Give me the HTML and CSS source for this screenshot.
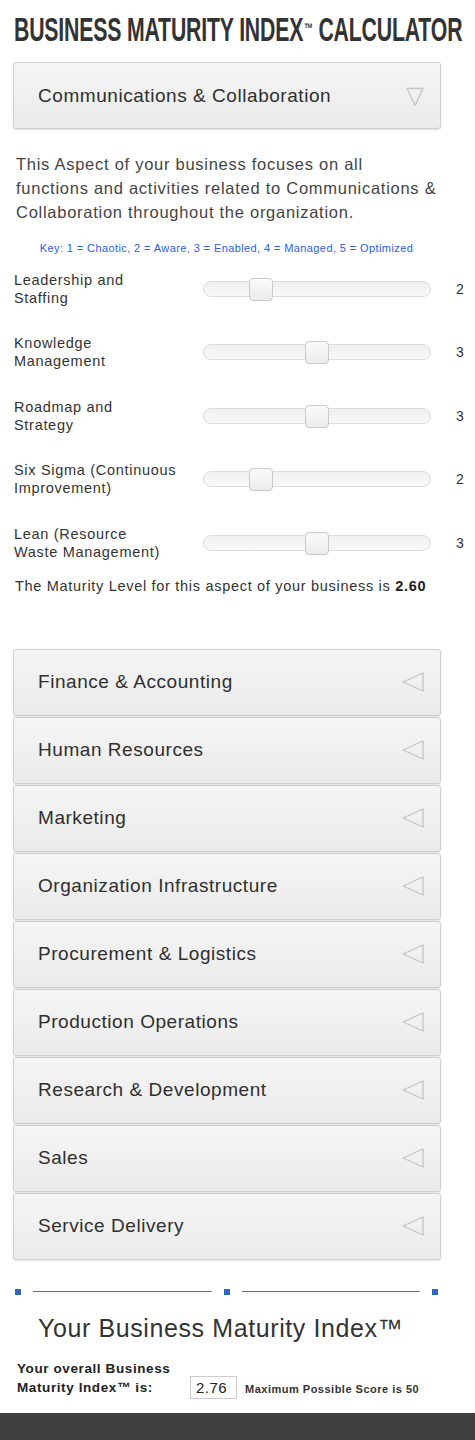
FILE: index.html
```html
<!DOCTYPE html>
<html>
<head>
<meta charset="utf-8">
<link rel="stylesheet" href="styles.css">
</head>
<body>
<div class="page">
  <h1 class="title"><span class="title-inner">BUSINESS MATURITY INDEX<sup class="tm">™</sup> CALCULATOR</span></h1>

  <div class="acc-head open">
    <span class="acc-label">Communications &amp; Collaboration</span>
    <svg class="arrow-down" width="18" height="20" viewBox="0 0 18 20"><path d="M1 1.5 H17 L9 18.5 Z" fill="none" stroke="#c4c4c4" stroke-width="1.3" stroke-linejoin="round"/></svg>
  </div>

  <p class="desc">This Aspect of your business focuses on all functions and activities related to Communications &amp; Collaboration throughout the organization.</p>

  <p class="key">Key: 1 = Chaotic, 2 = Aware, 3 = Enabled, 4 = Managed, 5 = Optimized</p>

  <div class="sliders">
    <div class="srow">
      <div class="slabel">Leadership and<br>Staffing</div>
      <div class="track"><div class="thumb" style="left:25%"></div></div>
      <div class="sval">2</div>
    </div>
    <div class="srow">
      <div class="slabel">Knowledge<br>Management</div>
      <div class="track"><div class="thumb" style="left:50%"></div></div>
      <div class="sval">3</div>
    </div>
    <div class="srow">
      <div class="slabel">Roadmap and<br>Strategy</div>
      <div class="track"><div class="thumb" style="left:50%"></div></div>
      <div class="sval">3</div>
    </div>
    <div class="srow">
      <div class="slabel">Six Sigma (Continuous<br>Improvement)</div>
      <div class="track"><div class="thumb" style="left:25%"></div></div>
      <div class="sval">2</div>
    </div>
    <div class="srow">
      <div class="slabel">Lean (Resource<br>Waste Management)</div>
      <div class="track"><div class="thumb" style="left:50%"></div></div>
      <div class="sval">3</div>
    </div>
  </div>

  <p class="result">The Maturity Level for this aspect of your business is <b>2.60</b></p>

  <div class="acc-list">
    <div class="acc-head"><span class="acc-label">Finance &amp; Accounting</span><svg class="arrow-left" width="24" height="22" viewBox="0 0 24 22"><path d="M22 2 V20 L2 11 Z" fill="none" stroke="#c4c4c4" stroke-width="1.3" stroke-linejoin="round"/></svg></div>
    <div class="acc-head"><span class="acc-label">Human Resources</span><svg class="arrow-left" width="24" height="22" viewBox="0 0 24 22"><path d="M22 2 V20 L2 11 Z" fill="none" stroke="#c4c4c4" stroke-width="1.3" stroke-linejoin="round"/></svg></div>
    <div class="acc-head"><span class="acc-label">Marketing</span><svg class="arrow-left" width="24" height="22" viewBox="0 0 24 22"><path d="M22 2 V20 L2 11 Z" fill="none" stroke="#c4c4c4" stroke-width="1.3" stroke-linejoin="round"/></svg></div>
    <div class="acc-head"><span class="acc-label">Organization Infrastructure</span><svg class="arrow-left" width="24" height="22" viewBox="0 0 24 22"><path d="M22 2 V20 L2 11 Z" fill="none" stroke="#c4c4c4" stroke-width="1.3" stroke-linejoin="round"/></svg></div>
    <div class="acc-head"><span class="acc-label">Procurement &amp; Logistics</span><svg class="arrow-left" width="24" height="22" viewBox="0 0 24 22"><path d="M22 2 V20 L2 11 Z" fill="none" stroke="#c4c4c4" stroke-width="1.3" stroke-linejoin="round"/></svg></div>
    <div class="acc-head"><span class="acc-label">Production Operations</span><svg class="arrow-left" width="24" height="22" viewBox="0 0 24 22"><path d="M22 2 V20 L2 11 Z" fill="none" stroke="#c4c4c4" stroke-width="1.3" stroke-linejoin="round"/></svg></div>
    <div class="acc-head"><span class="acc-label">Research &amp; Development</span><svg class="arrow-left" width="24" height="22" viewBox="0 0 24 22"><path d="M22 2 V20 L2 11 Z" fill="none" stroke="#c4c4c4" stroke-width="1.3" stroke-linejoin="round"/></svg></div>
    <div class="acc-head"><span class="acc-label">Sales</span><svg class="arrow-left" width="24" height="22" viewBox="0 0 24 22"><path d="M22 2 V20 L2 11 Z" fill="none" stroke="#c4c4c4" stroke-width="1.3" stroke-linejoin="round"/></svg></div>
    <div class="acc-head"><span class="acc-label">Service Delivery</span><svg class="arrow-left" width="24" height="22" viewBox="0 0 24 22"><path d="M22 2 V20 L2 11 Z" fill="none" stroke="#c4c4c4" stroke-width="1.3" stroke-linejoin="round"/></svg></div>
  </div>

  <div class="divider">
    <span class="dot"></span><span class="line"></span><span class="dot"></span><span class="line"></span><span class="dot"></span>
  </div>

  <h2 class="bmi-title">Your Business Maturity Index™</h2>

  <div class="overall">
    <div class="overall-label">Your overall Business<br>Maturity Index™ is:</div>
    <div class="score-box">2.76</div>
    <div class="max">Maximum Possible Score is 50</div>
  </div>
</div>
<footer class="footer"></footer>
</body>
</html>
```

FILE: styles.css
```css
* { box-sizing: border-box; }
html, body { margin: 0; padding: 0; background: #fff; }
body { font-family: "Liberation Sans", Arial, sans-serif; color: #333; }

.title {
  margin: 0;
  padding: 12px 0 0 14px;
  height: 62px;
  font-size: 33px;
  line-height: 36px;
  font-weight: bold;
  color: #333;
  white-space: nowrap;
  overflow: hidden;
}
.title-inner {
  display: inline-block;
  transform: scaleX(0.645);
  transform-origin: left center;
  letter-spacing: -0.3px;
}
.tm { font-size: 14px; vertical-align: top; position: relative; top: -2px; margin-left: 1px; }

.acc-head {
  width: 428px;
  height: 67px;
  margin-left: 13px;
  border: 1px solid #cfcfcf;
  border-radius: 3px;
  background: linear-gradient(#f5f5f5, #ebebeb);
  box-shadow: 0 1px 2px rgba(0,0,0,0.12);
  display: flex;
  align-items: center;
  justify-content: space-between;
  padding: 0 15px 0 24px;
}
.acc-label { font-size: 19px; color: #2f2f2f; letter-spacing: 0.55px; }
.arrow-down { margin-right: 1px; margin-top: 2px; }

.desc {
  margin: 23px 0 0 16px;
  width: 424px;
  font-size: 16.5px;
  line-height: 24px;
  color: #444;
  letter-spacing: 0.73px;
}
.key {
  margin: 18px 0 0 0;
  text-align: center;
  font-size: 11px;
  letter-spacing: 0.4px;
  color: #2a5cf0;
  padding-right: 22px;
}

.sliders { margin-top: 3px; }
.srow {
  display: flex;
  align-items: center;
  height: 63.5px;
  padding-left: 14px;
}
.slabel {
  width: 189px;
  font-size: 14.5px;
  line-height: 18px;
  letter-spacing: 0.7px;
  color: #333;
}
.track {
  position: relative;
  width: 228px;
  height: 16px;
  border: 1px solid #dcdcdc;
  border-radius: 8px;
  background: linear-gradient(#f0f0f0, #f8f8f8);
}
.thumb {
  position: absolute;
  top: -4px;
  width: 24px;
  height: 23px;
  margin-left: -12px;
  border: 1px solid #cacaca;
  border-radius: 4px;
  background: linear-gradient(#fafafa, #ececec);
}
.sval {
  margin-left: 25px;
  font-size: 14px;
  color: #333;
}

.result {
  margin: 3px 0 0 15px;
  font-size: 14.5px;
  letter-spacing: 0.7px;
  color: #333;
}
.result b { color: #222; }

.acc-list {
  margin-top: 55px;
  display: flex;
  flex-direction: column;
  gap: 1px;
}

.divider {
  margin: 29px 0 0 15px;
  width: 423px;
  display: flex;
  align-items: center;
}
.dot { width: 6px; height: 6px; background: #2a6bb5; flex: none; }
.line { flex: 1; height: 1px; background: #3a78c0; margin: 0 12px; }
.line:first-of-type { margin: 0 13px 0 13px; }

.bmi-title {
  margin: 18px 0 0 38px;
  font-size: 25px;
  font-weight: normal;
  letter-spacing: 0.6px;
  color: #333;
  line-height: 30px;
}

.overall {
  margin: 16px 0 0 17px;
  display: flex;
  align-items: flex-end;
}
.overall-label {
  width: 173px;
  font-size: 13.5px;
  font-weight: bold;
  line-height: 19px;
  letter-spacing: 0.6px;
  color: #222;
}
.score-box {
  width: 47px;
  height: 23px;
  border: 1px solid #ccc;
  font-size: 15px;
  line-height: 21px;
  padding-left: 5px;
  letter-spacing: 0.5px;
  color: #222;
  margin-bottom: -2px;
}
.max {
  margin-left: 8px;
  font-size: 11px;
  font-weight: bold;
  letter-spacing: 0.5px;
  color: #333;
  margin-bottom: 2px;
}

.footer {
  margin-top: 16px;
  height: 40px;
  background: #404040;
}
```
